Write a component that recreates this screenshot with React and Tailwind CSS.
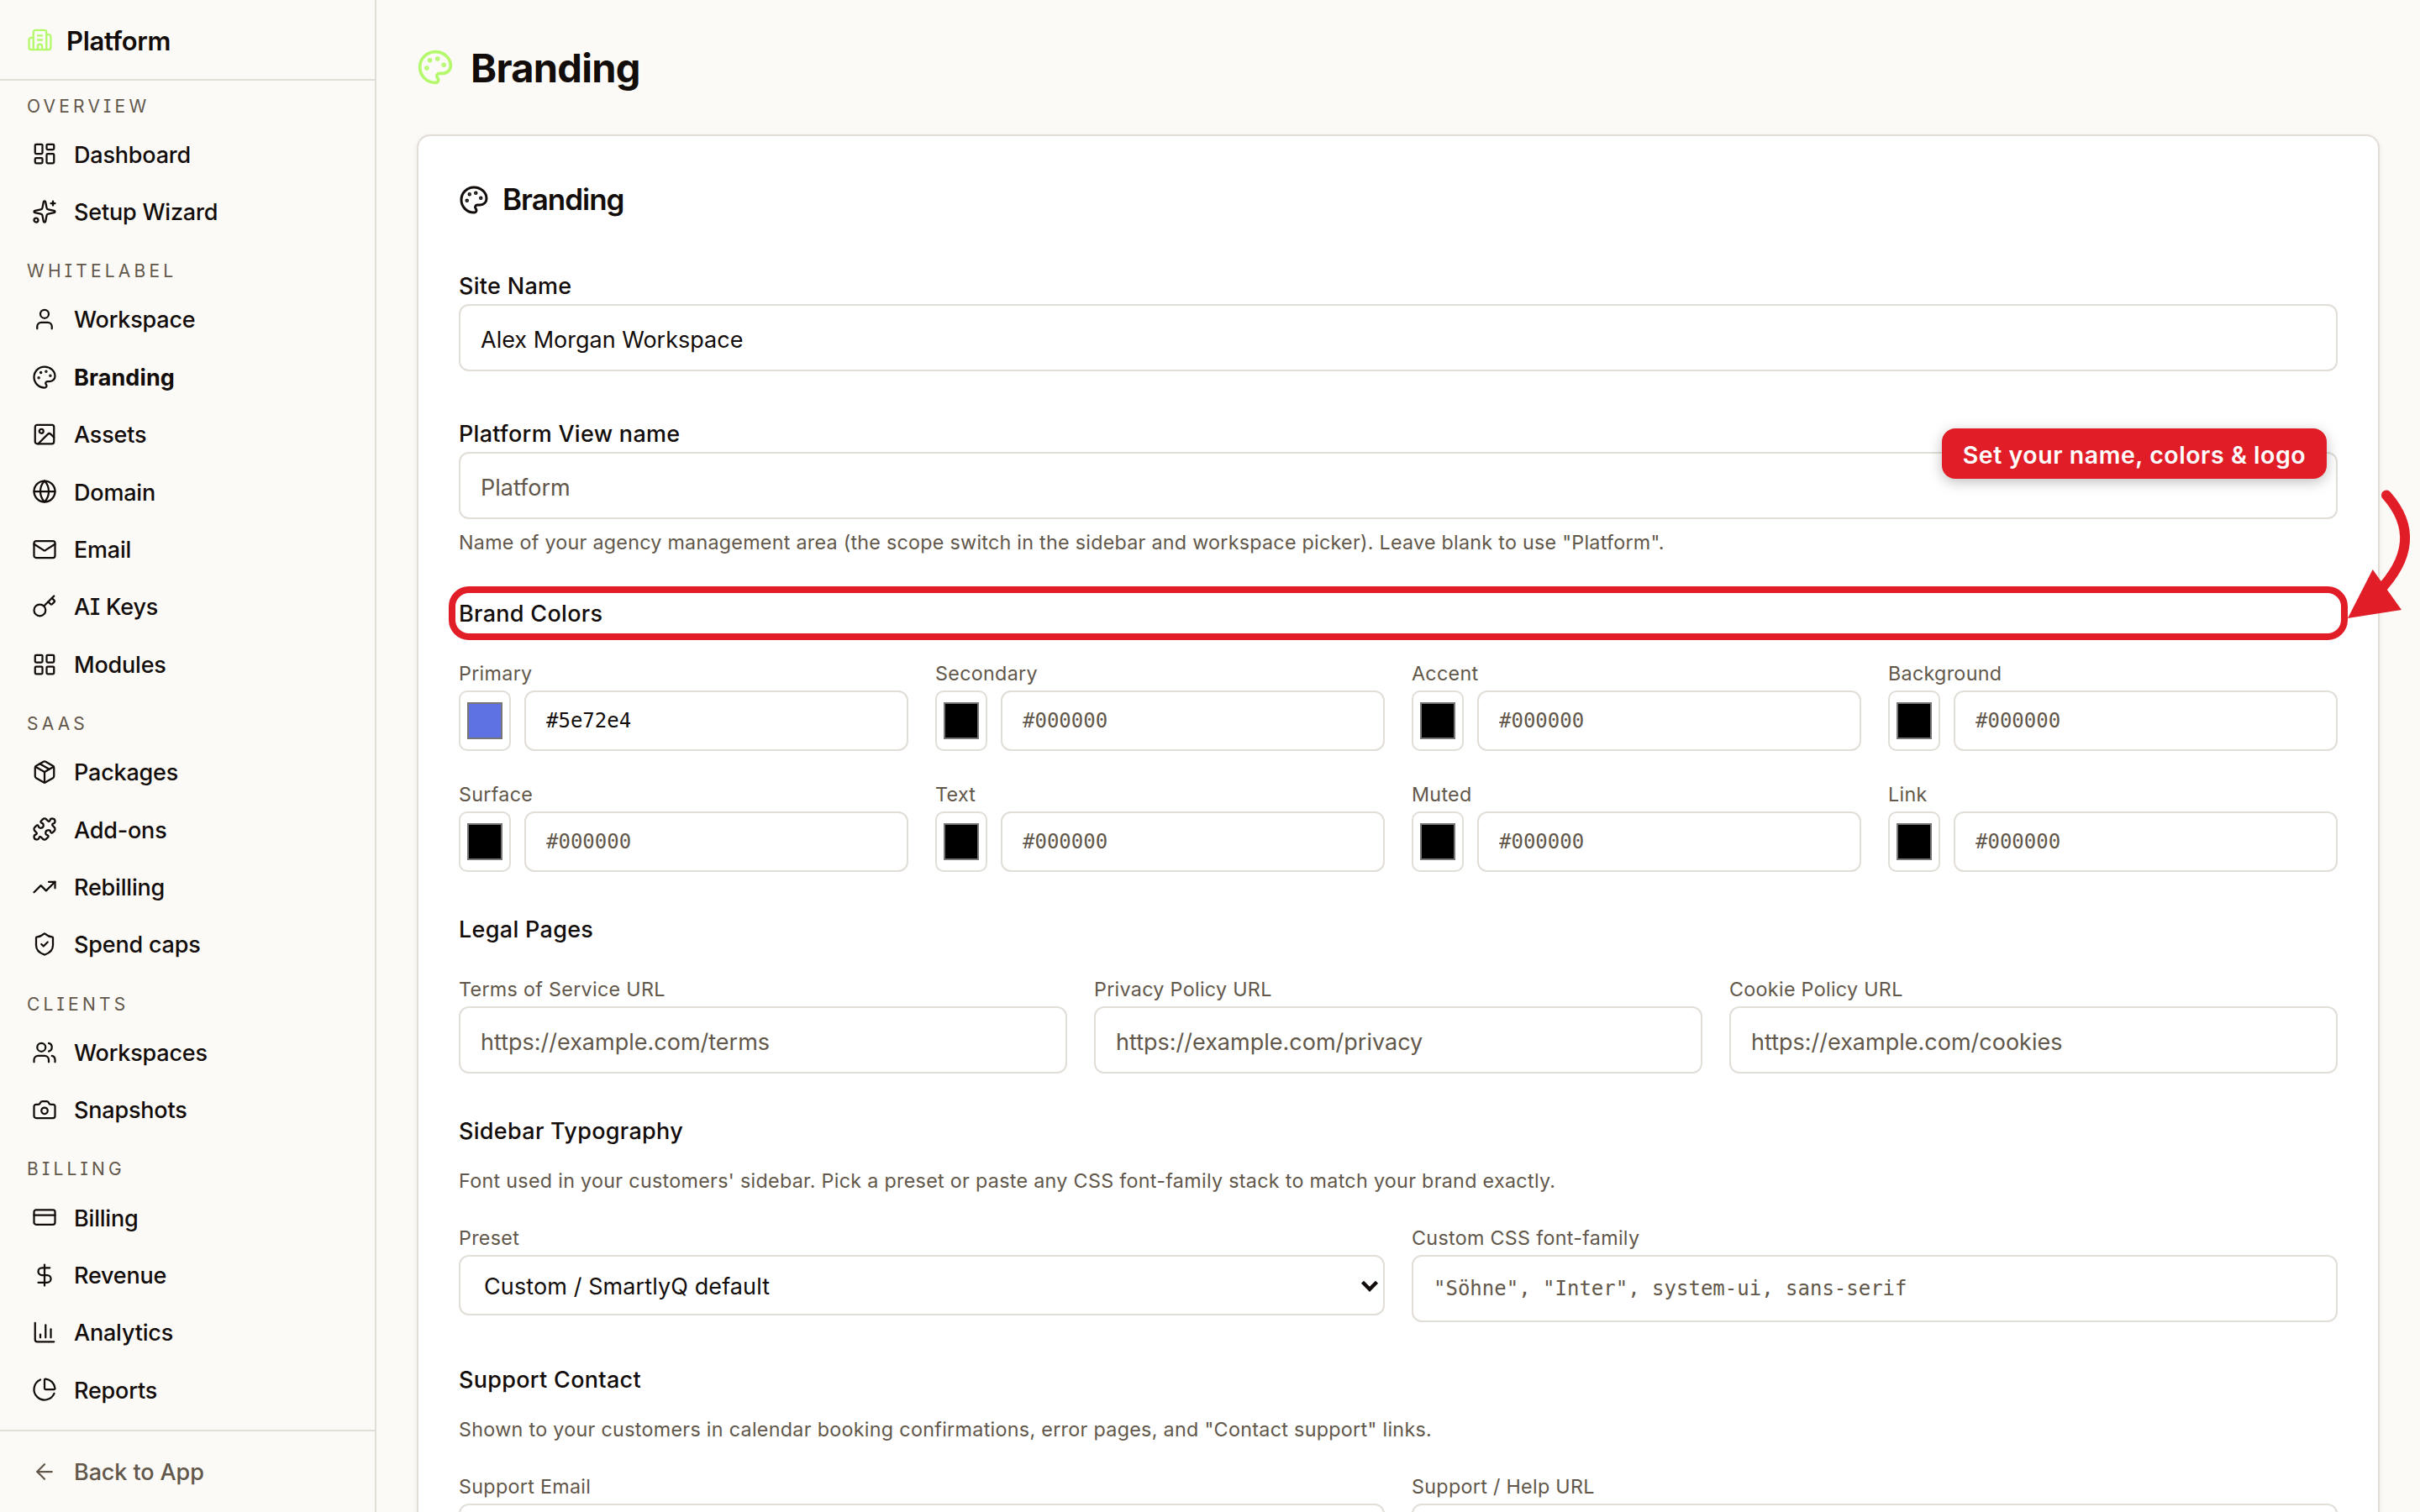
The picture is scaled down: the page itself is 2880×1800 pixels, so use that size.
import {
    ArrowLeft, Building2, Camera, ChartColumn, ChartPie, CreditCard, DollarSign, Globe, Image, Key,
    LayoutDashboard, LayoutGrid, Mail, Package, Palette, Puzzle, ShieldCheck, Sparkles, TrendingUp, User, Users,
} from "lucide-react";

const NAV = [
    { label: "Overview", items: [["Dashboard", LayoutDashboard], ["Setup Wizard", Sparkles]] },
    {
        label: "Whitelabel",
        items: [
            ["Workspace", User], ["Branding", Palette], ["Assets", Image], ["Domain", Globe],
            ["Email", Mail], ["AI Keys", Key], ["Modules", LayoutGrid],
        ],
    },
    { label: "SaaS", items: [["Packages", Package], ["Add-ons", Puzzle], ["Rebilling", TrendingUp], ["Spend caps", ShieldCheck]] },
    { label: "Clients", items: [["Workspaces", Users], ["Snapshots", Camera]] },
    { label: "Billing", items: [["Billing", CreditCard], ["Revenue", DollarSign], ["Analytics", ChartColumn], ["Reports", ChartPie]] },
];

const COLORS = [
    { label: "Primary", value: "#5e72e4" },
    { label: "Secondary" },
    { label: "Accent" },
    { label: "Background" },
    { label: "Surface" },
    { label: "Text" },
    { label: "Muted" },
    { label: "Link" },
];

const LEGAL = [
    ["Terms of Service URL", "https://example.com/terms"],
    ["Privacy Policy URL", "https://example.com/privacy"],
    ["Cookie Policy URL", "https://example.com/cookies"],
];

const inputClass =
    "block w-full h-20 px-6 pt-[5px] rounded-[12px] border-2 border-[#e1ddd7] bg-white text-[27px] text-[#120d0a] placeholder:text-[#61574a] placeholder:opacity-100 outline-none";
const monoClass =
    "block w-full min-w-0 px-6 rounded-[12px] border-2 border-[#e1ddd7] bg-white font-['DejaVu_Sans_Mono',monospace] text-[24px] text-[#120d0a] placeholder:text-[#61574a] placeholder:opacity-100 outline-none";

function SmallLabel({ children }) {
    return <label className="block h-10 leading-[40px] text-[23.3px] tracking-[0.3px] text-[#61574a]">{children}</label>;
}

function Label({ children }) {
    return <label className="block h-11 leading-[45px] text-[27px] font-medium tracking-[0.3px]">{children}</label>;
}

function SectionTitle({ children }) {
    return <h3 className="mt-11 h-12 leading-[49px] text-[27px] font-medium tracking-[0.3px]">{children}</h3>;
}

function Hint({ children }) {
    return <p className="mt-4 h-10 leading-[40px] text-[23.3px] tracking-[0.3px] text-[#61574a]">{children}</p>;
}

function Sidebar() {
    return (
        <aside className="w-[448px] shrink-0 h-full flex flex-col border-r-2 border-[#dfded7]">
            <div className="h-24 shrink-0 flex items-center gap-4 pl-8 border-b-2 border-[#dfded7]">
                <Building2 size={31} strokeWidth={1.8} className="text-[#b4f86c]" />
                <span className="pt-[5px] text-[31px] font-semibold tracking-[-0.3px]">Platform</span>
            </div>

            <nav className="flex-1 pt-[6.7px] flex flex-col gap-[12.4px]">
                {NAV.map(section => (
                    <div key={section.label}>
                        <div className="h-[47.6px] pl-8 leading-[48.6px] text-[21px] uppercase tracking-[4.2px] text-[#61574a]">
                            {section.label}
                        </div>
                        {section.items.map(([name, Icon]) => (
                            <a key={name} className="h-[68.4px] pl-[38px] flex items-center gap-5">
                                <Icon size={30} strokeWidth={1.8} className="-mt-[2px]" />
                                <span className={name === "Branding" ? "pt-px text-[27px] font-bold tracking-[0.1px]" : "pt-px text-[27px] font-medium tracking-[-0.2px]"}>
                                    {name}
                                </span>
                            </a>
                        ))}
                    </div>
                ))}
            </nav>

            <div className="h-[98px] shrink-0 border-t-2 border-[#dfded7] pl-[38px] pt-[2px] flex items-center gap-5 text-[#61574a]">
                <ArrowLeft size={30} strokeWidth={1.8} className="-mt-[3px]" />
                <span className="text-[27px] font-medium tracking-[-0.1px]">Back to App</span>
            </div>
        </aside>
    );
}

function ColorField({ label, value }) {
    return (
        <div>
            <SmallLabel>{label}</SmallLabel>
            <div className="flex gap-4">
                <div className="w-[62px] h-[72px] shrink-0 rounded-[10px] border-2 border-[#e1ddd7] flex items-center justify-center">
                    <div className="w-[42px] h-11 border-2 border-[#767676]" style={{ backgroundColor: value || "#000000" }} />
                </div>
                <input className={`${monoClass} h-[72px]`} defaultValue={value} placeholder="#000000" />
            </div>
        </div>
    );
}

export default function App() {
    return (
        <div className="w-[2880px] h-[1800px] overflow-hidden flex bg-[#fcfaf6] text-[#120d0a] font-['Inter',sans-serif] [font-feature-settings:'cv08']">
            <Sidebar />

            <main className="relative flex-1 h-full px-12 overflow-hidden">
                <header className="h-40 flex items-center gap-5">
                    <Palette size={44} strokeWidth={2} className="text-[#b4f86c]" />
                    <h1 className="pt-[3px] text-[47px] font-bold tracking-[-0.7px]">Branding</h1>
                </header>

                <section className="h-[1800px] px-12 pt-[52px] rounded-[16px] border-2 border-[#e1ddd7] bg-white shadow-[0_2px_6px_rgba(0,0,0,0.07)]">
                    <div className="h-12 flex items-center gap-4">
                        <Palette size={36} strokeWidth={2} />
                        <h2 className="-mt-[2px] text-[35px] font-semibold tracking-[-1px]">Branding</h2>
                    </div>

                    <div className="mt-14">
                        <Label>Site Name</Label>
                        <input className={inputClass} defaultValue="Alex Morgan Workspace" />
                    </div>

                    <div className="mt-[52px]">
                        <Label>Platform View name</Label>
                        <div className="relative">
                            <input className={inputClass} placeholder="Platform" />
                            {/* Callout */}
                            <div className="absolute -top-7 right-[13px] w-[458px] h-[60px] pt-[4px] flex items-center justify-center rounded-[16px] bg-[#e11d28] text-white text-[28.5px] font-semibold tracking-[0.55px] whitespace-nowrap shadow-[0_4px_16px_rgba(0,0,0,0.25)]">
                                Set your name, colors &amp; logo
                            </div>
                        </div>
                        <p className="h-14 leading-[56px] text-[23.3px] tracking-[0.26px] text-[#61574a]">
                            Name of your agency management area (the scope switch in the sidebar and workspace picker). Leave blank to use "Platform".
                        </p>
                    </div>

                    <h3 className="relative mt-8 h-12 leading-[49px] text-[27px] font-medium tracking-[0.3px]">
                        Brand Colors
                        <span className="absolute -inset-x-3 -inset-y-2 border-8 border-[#e11d28] rounded-[24px]" />
                    </h3>
                    <div className="mt-7 grid grid-cols-4 gap-8">
                        {COLORS.map(color => <ColorField key={color.label} {...color} />)}
                    </div>

                    <SectionTitle>Legal Pages</SectionTitle>
                    <div className="mt-7 grid grid-cols-3 gap-8">
                        {LEGAL.map(([label, placeholder]) => (
                            <div key={label}>
                                <SmallLabel>{label}</SmallLabel>
                                <input className={inputClass} placeholder={placeholder} />
                            </div>
                        ))}
                    </div>

                    <SectionTitle>Sidebar Typography</SectionTitle>
                    <Hint>Font used in your customers' sidebar. Pick a preset or paste any CSS font-family stack to match your brand exactly.</Hint>
                    <div className="mt-7 grid grid-cols-2 gap-8">
                        <div>
                            <SmallLabel>Preset</SmallLabel>
                            <div className="relative">
                                <select className="block appearance-none w-full h-[72px] pl-[28px] pt-[5px] rounded-[12px] border-2 border-[#e1ddd7] bg-white text-[27px] tracking-[0.1px] outline-none">
                                    <option>Custom / SmartlyQ default</option>
                                </select>
                                <svg className="absolute right-[7px] top-[29px] w-[22px] h-4" viewBox="0 0 22 16" fill="none" stroke="#120d0a" strokeWidth="4.4">
                                    <path d="M2.5 3.2L11 11.8L19.5 3.2" />
                                </svg>
                            </div>
                        </div>
                        <div>
                            <SmallLabel>Custom CSS font-family</SmallLabel>
                            <input className={`${monoClass} h-20`} placeholder={'"Söhne", "Inter", system-ui, sans-serif'} />
                        </div>
                    </div>

                    <SectionTitle>Support Contact</SectionTitle>
                    <Hint>Shown to your customers in calendar booking confirmations, error pages, and "Contact support" links.</Hint>
                    <div className="mt-7 grid grid-cols-2 gap-8">
                        <div>
                            <SmallLabel>Support Email</SmallLabel>
                            <input className={inputClass} />
                        </div>
                        <div>
                            <SmallLabel>Support / Help URL</SmallLabel>
                            <input className={inputClass} />
                        </div>
                    </div>
                </section>

                {/* Arrow from the callout to the highlighted heading */}
                <svg className="absolute left-[2332px] top-[576px] w-[100px] h-[176px]" viewBox="2780 576 100 176">
                    <path d="M2840 589.5Q2888.8 644.3 2830 705" fill="none" stroke="#e11d28" strokeWidth="12" strokeLinecap="round" />
                    <path d="M2794 736L2823.7 678L2858 726Z" fill="#e11d28" />
                </svg>
            </main>
        </div>
    );
}
